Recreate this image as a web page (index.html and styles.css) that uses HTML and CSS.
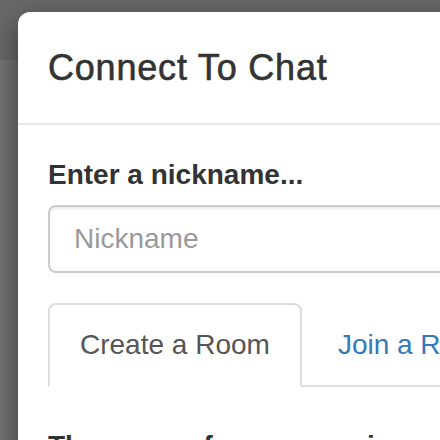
FILE: index.html
```html
<!DOCTYPE html>
<html>
<head>
<meta charset="utf-8">
<link rel="stylesheet" href="styles.css">
</head>
<body>
<div class="page">
  <div class="navbar"></div>
  <div class="backdrop-rest"></div>
</div>
<div class="modal">
  <div class="modal-header">
    <h4 class="modal-title">Connect To Chat</h4>
  </div>
  <div class="modal-body">
    <div class="form-group">
      <label class="label">Enter a nickname...</label>
      <input class="form-control" type="text" placeholder="Nickname">
    </div>
    <ul class="nav-tabs">
      <li class="tab active"><a>Create a Room</a></li>
      <li class="tab"><a>Join a Room</a></li>
    </ul>
    <div class="tab-content">
      <label class="label">The name of your room is...</label>
    </div>
  </div>
</div>
</body>
</html>
```
FILE: styles.css
```css
html, body {
  margin: 0;
  padding: 0;
  width: 440px;
  height: 440px;
  overflow: hidden;
  font-family: "Liberation Sans", Arial, sans-serif;
}
.page {
  display: flex;
  flex-direction: column;
  height: 440px;
  background: #747474;
}
.navbar {
  height: 60px;
  background: #686a69;
}
.backdrop-rest {
  flex: 1;
}
.modal {
  position: absolute;
  left: 18px;
  top: 12px;
  width: 1200px;
  background: #fff;
  border-radius: 12px;
  box-shadow: 0 10px 30px rgba(0,0,0,0.5);
  color: #333;
}
.modal-header {
  padding: 30px;
  border-bottom: 2px solid #e5e5e5;
}
.modal-title {
  margin: 0;
  font-size: 36px;
  font-weight: 500;
  line-height: 51.4px;
  letter-spacing: 0.8px;
  -webkit-text-stroke: 0.6px #333;
  color: #333;
}
.modal-body {
  padding: 30px;
}
.form-group {
  margin-bottom: 30px;
}
.label {
  display: block;
  font-size: 28px;
  font-weight: bold;
  line-height: 40px;
  margin-bottom: 10px;
  color: #333;
}
.form-control {
  display: block;
  box-sizing: border-box;
  width: 100%;
  height: 68px;
  padding: 12px 24px;
  font-size: 28px;
  font-family: "Liberation Sans", Arial, sans-serif;
  color: #555;
  border: 2px solid #ccc;
  border-radius: 8px;
  box-shadow: inset 0 2px 2px rgba(0,0,0,0.075);
  outline: none;
}
.form-control::placeholder {
  color: #999;
}
.nav-tabs {
  display: flex;
  list-style: none;
  margin: 0;
  padding: 0;
  border-bottom: 2px solid #ddd;
}
.tab {
  margin-right: 4px;
  margin-bottom: -2px;
}
.tab a {
  display: block;
  padding: 20px 30px;
  font-size: 28px;
  line-height: 40px;
  color: #337ab7;
  border: 2px solid transparent;
  border-radius: 8px 8px 0 0;
}
.tab.active a {
  color: #555;
  background: #fff;
  border-color: #ddd;
  border-bottom-color: transparent;
}
.tab-content {
  padding-top: 39px;
}
```
